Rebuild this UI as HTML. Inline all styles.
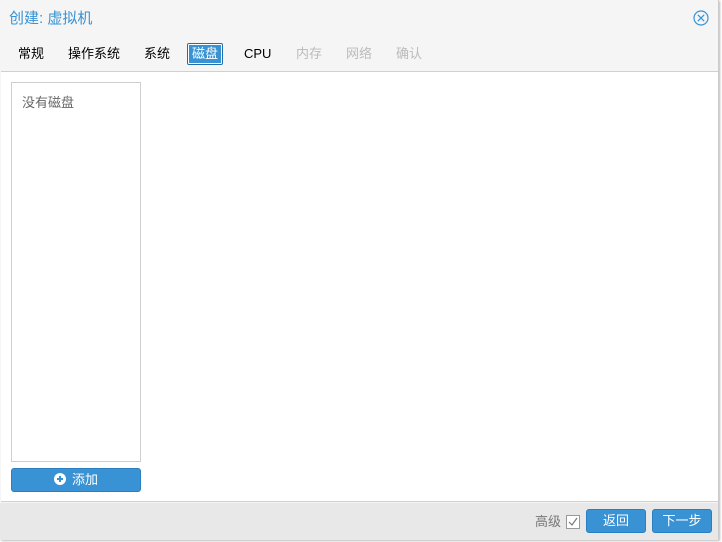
<!DOCTYPE html>
<html><head><meta charset="utf-8"><style>
*{margin:0;padding:0;box-sizing:border-box}
body{width:722px;height:542px;background:#fff;font-family:"Liberation Sans","Noto Sans CJK SC",sans-serif;position:relative;overflow:hidden}
.win{position:absolute;left:0;top:0;width:719px;height:540px;background:#f5f5f5;border-right:1px solid #ccc;border-bottom:1px solid #ccc;box-shadow:1px 1px 2px #bbb}
.title{position:absolute;left:9px;top:10px;font-size:15px;line-height:18px;color:#3892d4}
.close{position:absolute;left:692px;top:9px}
.tab{position:absolute;top:46px;font-size:13px;line-height:16px;color:#000}
.tab.dis{color:#bbb}
.tab.act{background:#3892d4;color:#fff;border:1px solid #1f6fad;outline:1px solid #fff;outline-offset:-2px;padding:2px 4px;top:43px;border-radius:2px}
.body{position:absolute;left:1px;top:71px;width:717px;height:431px;background:#fff;border-top:1px solid #d0d0d0;border-bottom:1px solid #d0d0d0}
.list{position:absolute;left:11px;top:82px;width:130px;height:380px;border:1px solid #cfcfcf;background:#fff}
.list span{position:absolute;left:10px;top:12px;font-size:13px;line-height:16px;color:#666}
.btn{position:absolute;background:#3892d4;border:1px solid #2a7fc0;border-radius:3px;color:#fff;font-size:13px;text-align:center}
.foot{position:absolute;left:0;top:503px;width:718px;height:37px;background:#e8e8e8}
</style></head><body>
<div class="win">
<div class="title">创建: 虚拟机</div>
<svg class="close" width="18" height="18" viewBox="0 0 18 18"><circle cx="9" cy="9" r="7" fill="none" stroke="#3892d4" stroke-width="1.2"/><path d="M5.8 5.8L12.2 12.2M12.2 5.8L5.8 12.2" stroke="#3892d4" stroke-width="1.2"/></svg>
<div class="tab" style="left:18px">常规</div>
<div class="tab" style="left:68px">操作系统</div>
<div class="tab" style="left:144px">系统</div>
<div class="tab act" style="left:187px">磁盘</div>
<div class="tab" style="left:244px;top:46px">CPU</div>
<div class="tab dis" style="left:296px">内存</div>
<div class="tab dis" style="left:346px">网络</div>
<div class="tab dis" style="left:396px">确认</div>
<div class="body"></div>
<div class="list"><span>没有磁盘</span></div>
<div class="btn" style="left:11px;top:468px;width:130px;height:24px;line-height:22px"><svg width="12" height="12" viewBox="0 0 12 12" style="vertical-align:-1px;margin-right:6px"><circle cx="6" cy="6" r="6" fill="#fff"/><path d="M3 6H9M6 3V9" stroke="#3892d4" stroke-width="2"/></svg>添加</div>
<div class="foot"></div>
<div style="position:absolute;left:535px;top:514px;font-size:13px;line-height:16px;color:#777">高级</div>
<svg style="position:absolute;left:566px;top:515px" width="14" height="14" viewBox="0 0 14 14"><rect x="0.5" y="0.5" width="13" height="13" fill="#fff" stroke="#999"/><path d="M3 7L6 10L11 3" fill="none" stroke="#777" stroke-width="1.2"/></svg>
<div class="btn" style="left:586px;top:509px;width:60px;height:24px;line-height:21px">返回</div>
<div class="btn" style="left:652px;top:509px;width:60px;height:24px;line-height:21px">下一步</div>
</div>
</body></html>
